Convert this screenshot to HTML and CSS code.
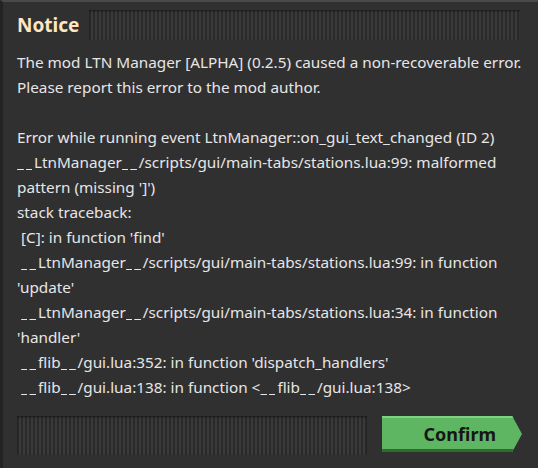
FILE: index.html
```html
<!DOCTYPE html>
<html>
<head>
<meta charset="utf-8">
<link rel="stylesheet" href="styles.css">
</head>
<body>
<div class="frame">
  <div class="titlebar">
    <div class="title">Notice</div>
    <div class="handle"></div>
  </div>
  <div class="message">
    <div class="line">The mod LTN Manager [ALPHA] (0.2.5) caused a non-recoverable error.</div>
    <div class="line">Please report this error to the mod author.</div>
    <div class="line">&nbsp;</div>
    <div class="line">Error while running event LtnManager::on_gui_text_changed (ID 2)</div>
    <div class="line"><span class="us">_</span><span class="us">_</span>LtnManager<span class="us">_</span><span class="us">_</span>/scripts/gui/main-tabs/stations.lua:99: malformed</div>
    <div class="line">pattern (missing ']')</div>
    <div class="line">stack traceback:</div>
    <div class="line">&nbsp;[C]: in function 'find'</div>
    <div class="line">&nbsp;<span class="us">_</span><span class="us">_</span>LtnManager<span class="us">_</span><span class="us">_</span>/scripts/gui/main-tabs/stations.lua:99: in function</div>
    <div class="line">'update'</div>
    <div class="line">&nbsp;<span class="us">_</span><span class="us">_</span>LtnManager<span class="us">_</span><span class="us">_</span>/scripts/gui/main-tabs/stations.lua:34: in function</div>
    <div class="line">'handler'</div>
    <div class="line">&nbsp;<span class="us">_</span><span class="us">_</span>flib<span class="us">_</span><span class="us">_</span>/gui.lua:352: in function 'dispatch_handlers'</div>
    <div class="line">&nbsp;<span class="us">_</span><span class="us">_</span>flib<span class="us">_</span><span class="us">_</span>/gui.lua:138: in function &lt;<span class="us">_</span><span class="us">_</span>flib<span class="us">_</span><span class="us">_</span>/gui.lua:138&gt;</div>
  </div>
  <div class="footer">
    <div class="filler"></div>
    <div class="confirm">Confirm</div>
  </div>
</div>
</body>
</html>
```
FILE: styles.css
```css
html, body {
  margin: 0;
  padding: 0;
  background: #313031;
}
.frame {
  width: 538px;
  height: 468px;
  box-sizing: border-box;
  background: #313031;
  border-top: 2px solid #4a494a;
  border-left: 3px solid #242324;
  display: flex;
  flex-direction: column;
  font-family: "Noto Sans", sans-serif;
}
.titlebar {
  display: flex;
  align-items: center;
  padding: 8px 18px 0 14px;
  height: 30px;
  gap: 10px;
}
.title {
  color: #ffe6c0;
  font-weight: bold;
  font-size: 19px;
  line-height: 30px;
}
.handle {
  flex: 1;
  height: 30px;
  background: repeating-linear-gradient(90deg, #2b2a2b 0, #2b2a2b 2px, #3b3a3b 2px, #3b3a3b 4px);
  box-shadow: inset 0 1px 2px rgba(0,0,0,0.5);
}
.message {
  padding: 10px 0 0 14px;
  color: #e6e6e6;
  font-size: 15.3px;
  line-height: 25px;
  height: 350px;
}
.line {
  white-space: pre;
  height: 25px;
}
.us {
  display: inline-block;
  width: 6.5px;
  margin-right: 2px;
  overflow: hidden;
  vertical-align: bottom;
}
.footer {
  display: flex;
  align-items: flex-start;
  padding: 16px 15px 0 14px;
  gap: 15px;
}
.filler {
  width: 350px;
  height: 39px;
  background: repeating-linear-gradient(90deg, #2b2a2b 0, #2b2a2b 2px, #3b3a3b 2px, #3b3a3b 4px);
  box-shadow: inset 0 1px 2px rgba(0,0,0,0.5);
}
.confirm {
  width: 140px;
  height: 36px;
  background: #5eb663;
  clip-path: polygon(0 0, 93% 0, 100% 50%, 93% 100%, 0 100%);
  box-shadow: inset 0 2px 0 #7fd184, inset 0 -3px 0 #2e6b31;
  color: #161616;
  font-weight: bold;
  font-size: 18px;
  line-height: 36px;
  text-align: right;
  padding-right: 26px;
  box-sizing: border-box;
}
```
